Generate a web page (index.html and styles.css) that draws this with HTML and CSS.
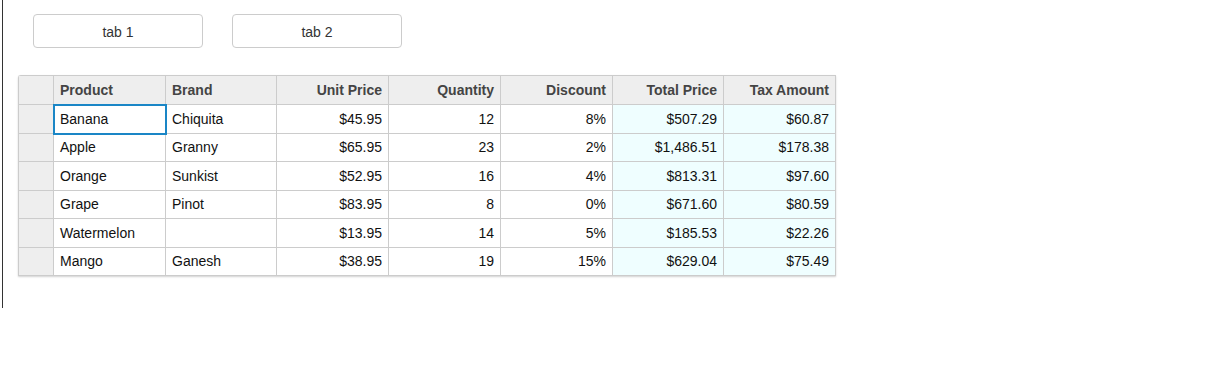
FILE: index.html
```html
<!DOCTYPE html>
<html>
<head>
<meta charset="utf-8">
<link rel="stylesheet" href="styles.css">
</head>
<body>
<div class="frame">
  <div class="tabs">
    <button class="tab">tab 1</button>
    <button class="tab">tab 2</button>
  </div>
  <div class="grid">
    <div class="c hd rh"></div>
    <div class="c hd">Product</div>
    <div class="c hd">Brand</div>
    <div class="c hd r">Unit Price</div>
    <div class="c hd r">Quantity</div>
    <div class="c hd r">Discount</div>
    <div class="c hd r">Total Price</div>
    <div class="c hd r">Tax Amount</div>

    <div class="c rh"></div>
    <div class="c sel">Banana</div>
    <div class="c">Chiquita</div>
    <div class="c r">$45.95</div>
    <div class="c r">12</div>
    <div class="c r">8%</div>
    <div class="c r calc">$507.29</div>
    <div class="c r calc">$60.87</div>

    <div class="c rh"></div>
    <div class="c">Apple</div>
    <div class="c">Granny</div>
    <div class="c r">$65.95</div>
    <div class="c r">23</div>
    <div class="c r">2%</div>
    <div class="c r calc">$1,486.51</div>
    <div class="c r calc">$178.38</div>

    <div class="c rh"></div>
    <div class="c">Orange</div>
    <div class="c">Sunkist</div>
    <div class="c r">$52.95</div>
    <div class="c r">16</div>
    <div class="c r">4%</div>
    <div class="c r calc">$813.31</div>
    <div class="c r calc">$97.60</div>

    <div class="c rh"></div>
    <div class="c">Grape</div>
    <div class="c">Pinot</div>
    <div class="c r">$83.95</div>
    <div class="c r">8</div>
    <div class="c r">0%</div>
    <div class="c r calc">$671.60</div>
    <div class="c r calc">$80.59</div>

    <div class="c rh"></div>
    <div class="c">Watermelon</div>
    <div class="c"></div>
    <div class="c r">$13.95</div>
    <div class="c r">14</div>
    <div class="c r">5%</div>
    <div class="c r calc">$185.53</div>
    <div class="c r calc">$22.26</div>

    <div class="c rh"></div>
    <div class="c">Mango</div>
    <div class="c">Ganesh</div>
    <div class="c r">$38.95</div>
    <div class="c r">19</div>
    <div class="c r">15%</div>
    <div class="c r calc">$629.04</div>
    <div class="c r calc">$75.49</div>
  </div>
</div>
</body>
</html>
```
FILE: styles.css
```css
html, body {
  margin: 0;
  padding: 0;
  background: #fff;
  font-family: "Liberation Sans", Arial, sans-serif;
  font-size: 14px;
  color: #111;
}
.frame {
  margin-left: 2px;
  height: 308px;
  border-left: 1px solid #333;
  padding: 14px 0 0 15px;
  box-sizing: border-box;
}
.tabs {
  display: flex;
  gap: 29px;
  margin-left: 15px;
}
.tab {
  width: 170px;
  height: 34px;
  background: #fff;
  border: 1px solid #ccc;
  border-radius: 4px;
  font-family: "Liberation Sans", Arial, sans-serif;
  font-size: 14px;
  color: #333;
  padding: 2px 0 0 0;
}
.grid {
  margin-top: 27px;
  display: grid;
  width: 818px;
  box-sizing: border-box;
  grid-template-columns: 35px 112px 111px 112px 112px 112px 111px 112px;
  grid-template-rows: 29px repeat(6, 28.5px);
  border-left: 1px solid #ccc;
  border-top: 1px solid #ccc;
  border-top-left-radius: 3px;
  box-shadow: 0 1px 2px rgba(0, 0, 0, 0.18);
}
.c {
  box-sizing: border-box;
  border-right: 1px solid #ccc;
  border-bottom: 1px solid #ccc;
  padding: 0 6px;
  display: flex;
  align-items: center;
  white-space: nowrap;
  overflow: visible;
}
.r {
  justify-content: flex-end;
}
.hd {
  background: #eee;
  font-weight: bold;
  color: #444;
}
.rh {
  background: #eee;
}
.calc {
  background: #effeff;
}
.sel {
  outline: 2px solid #1a86c6;
  outline-offset: -1px;
  position: relative;
  z-index: 1;
}
```
